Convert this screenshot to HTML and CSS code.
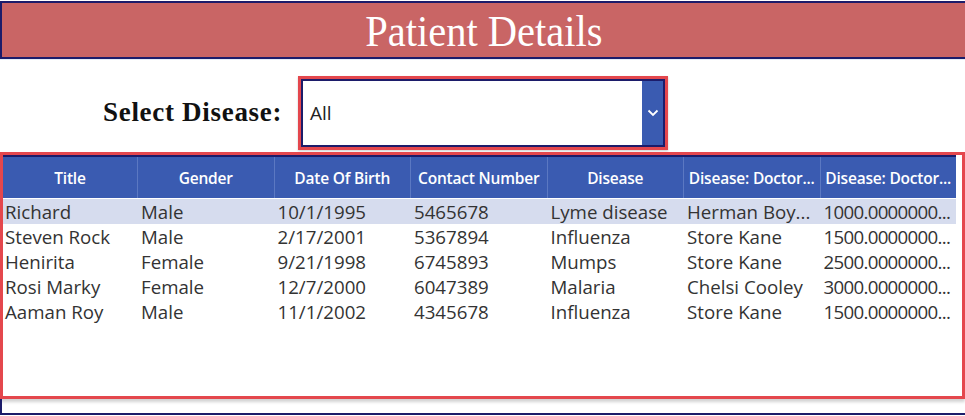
FILE: index.html
```html
<!DOCTYPE html>
<html>
<head>
<meta charset="utf-8">
<link rel="stylesheet" href="styles.css">
</head>
<body>
<div class="app">
  <header class="title-bar"><h1 class="title">Patient Details</h1></header>
  <section class="filter">
    <label class="filter-label">Select Disease:</label>
    <div class="dropdown-frame">
      <div class="dropdown">
        <span class="dropdown-value">All</span>
        <span class="dropdown-btn">
          <svg width="12" height="8" viewBox="0 0 12 8"><path d="M1.5 1.5 L6 6 L10.5 1.5" fill="none" stroke="#fff" stroke-width="1.8"/></svg>
        </span>
      </div>
    </div>
  </section>
  <section class="grid-frame">
    <div class="grid">
      <div class="row head">
        <div class="cell">Title</div>
        <div class="cell">Gender</div>
        <div class="cell">Date Of Birth</div>
        <div class="cell">Contact Number</div>
        <div class="cell">Disease</div>
        <div class="cell">Disease: Doctor...</div>
        <div class="cell">Disease: Doctor...</div>
      </div>
      <div class="row sel">
        <div class="cell">Richard</div><div class="cell">Male</div><div class="cell">10/1/1995</div><div class="cell">5465678</div><div class="cell">Lyme disease</div><div class="cell">Herman Boy...</div><div class="cell num">1000.0000000...</div>
      </div>
      <div class="row">
        <div class="cell">Steven Rock</div><div class="cell">Male</div><div class="cell">2/17/2001</div><div class="cell">5367894</div><div class="cell">Influenza</div><div class="cell">Store Kane</div><div class="cell num">1500.0000000...</div>
      </div>
      <div class="row">
        <div class="cell">Henirita</div><div class="cell">Female</div><div class="cell">9/21/1998</div><div class="cell">6745893</div><div class="cell">Mumps</div><div class="cell">Store Kane</div><div class="cell num">2500.0000000...</div>
      </div>
      <div class="row">
        <div class="cell">Rosi Marky</div><div class="cell">Female</div><div class="cell">12/7/2000</div><div class="cell">6047389</div><div class="cell">Malaria</div><div class="cell">Chelsi Cooley</div><div class="cell num">3000.0000000...</div>
      </div>
      <div class="row">
        <div class="cell">Aaman Roy</div><div class="cell">Male</div><div class="cell">11/1/2002</div><div class="cell">4345678</div><div class="cell">Influenza</div><div class="cell">Store Kane</div><div class="cell num">1500.0000000...</div>
      </div>
    </div>
  </section>
  <footer class="bottom"></footer>
</div>
</body>
</html>
```
FILE: styles.css
```css
html, body {
  margin: 0;
  padding: 0;
  background: #fff;
}
.app {
  width: 965px;
  height: 416px;
  display: flex;
  flex-direction: column;
  overflow: hidden;
}
.title-bar {
  margin-top: 1px;
  height: 54px;
  background: #c96565;
  border: 2px solid #1c1c6a;
  border-right: none;
  display: flex;
  align-items: center;
  justify-content: center;
}
.title {
  margin: 0;
  font-family: "Liberation Serif", serif;
  font-weight: normal;
  font-size: 45px;
  color: #fff;
  line-height: 1;
  transform: scaleX(0.9);
  padding-top: 2px;
}
.filter {
  height: 93px;
  display: flex;
  align-items: center;
  box-sizing: border-box;
  padding-top: 13px;
  border-top: 1px solid #e6eef6;
}
.filter-label {
  margin-left: 103px;
  width: 180px;
  font-family: "Liberation Serif", serif;
  font-weight: bold;
  font-size: 27px;
  letter-spacing: 0.7px;
  color: #111;
  white-space: nowrap;
}
.dropdown-frame {
  margin-left: 15px;
  border: 3px solid #e4474d;
  box-shadow: 0 1px 2px rgba(0,0,0,0.2);
}
.dropdown {
  width: 360px;
  height: 64px;
  border: 2px solid #1c1c6a;
  display: flex;
  align-items: center;
  background: #fff;
}
.dropdown-value {
  flex: 1;
  padding-left: 7px;
  font-family: "Open Sans", sans-serif;
  font-size: 19px;
  color: #222;
}
.dropdown-btn {
  width: 21px;
  height: 100%;
  background: #3a5bb1;
  display: flex;
  align-items: center;
  justify-content: center;
}
.grid-frame {
  height: 247px;
  box-sizing: border-box;
  border: 3px solid #e4474d;
  box-shadow: 0 3px 3px rgba(0,0,0,0.18);
}
.grid {
  border-top: 2px solid #1c1c6a;
  width: 953px;
}
.row {
  display: grid;
  grid-template-columns: 134px repeat(6, 136.5px);
  height: 25px;
  font-family: "Open Sans", sans-serif;
  font-size: 18.7px;
  color: #333;
}
.row.sel {
  background: #d6dcee;
}
.row.head {
  height: 41px;
  background: #3a5bb1;
  color: #fff;
  font-size: 15.5px;
  font-weight: 600;
  letter-spacing: -0.2px;
  margin-bottom: 1px;
}
.cell {
  padding-left: 2px;
  padding-right: 2px;
  display: flex;
  align-items: center;
  white-space: nowrap;
}
.row .cell + .cell {
  padding-left: 4px;
}
.cell.num {
  letter-spacing: -0.7px;
}
.row.head .cell {
  justify-content: center;
  padding: 0;
  border-left: 1px solid #5b78c2;
}
.row.head .cell:first-child {
  border-left: none;
}
.bottom {
  flex: 1;
  border-left: 2px solid #1c1c6a;
  border-bottom: 2px solid #1c1c6a;
  margin-bottom: 1px;
}
```
